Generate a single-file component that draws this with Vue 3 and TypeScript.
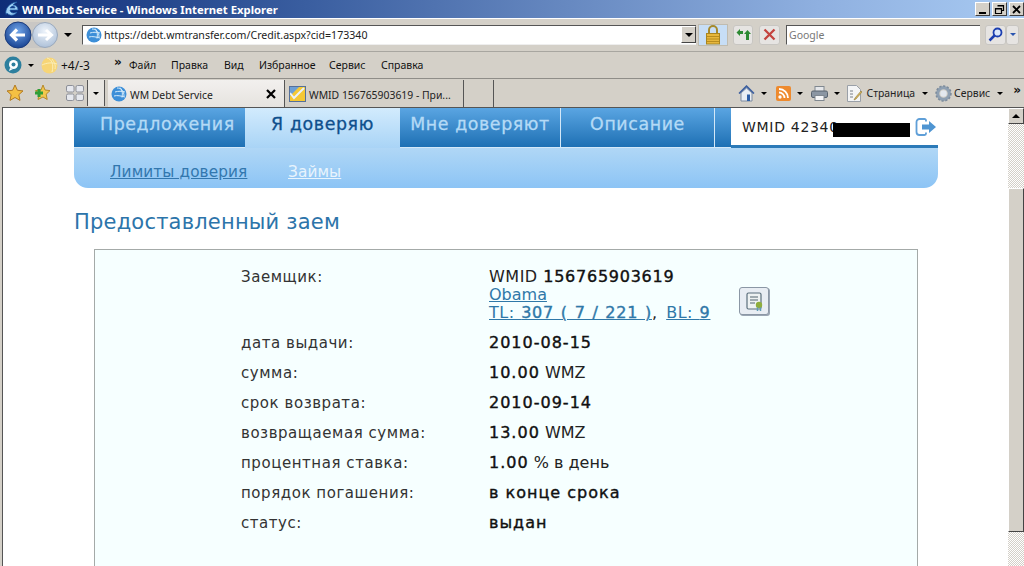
<script setup lang="ts">
interface Row { label: string; value: string; unit?: string }
const rows: Row[] = [
  { label: 'дата выдачи:', value: '2010-08-15' },
  { label: 'сумма:', value: '10.00', unit: ' WMZ' },
  { label: 'срок возврата:', value: '2010-09-14' },
  { label: 'возвращаемая сумма:', value: '13.00', unit: ' WMZ' },
  { label: 'процентная ставка:', value: '1.00', unit: ' % в день' },
  { label: 'порядок погашения:', value: 'в конце срока' },
  { label: 'статус:', value: 'выдан' },
]
const menu = ['Файл', 'Правка', 'Вид', 'Избранное', 'Сервис', 'Справка']
</script>

<template>
  <div class="window">
    <header class="titlebar">
      <svg class="ie" width="18" height="18" viewBox="0 0 18 18"><path d="M3 14C2 9 6 3 14 2c-2 1-3 2-4 3 3 0 5 2 5 5H7c0 3 4 4 7 2-2 4-8 4-10 1-1 1-1 2-1 1Zm4-6h5c0-2-3-3-5 0Z" fill="#9fd0f5" stroke="#1f5fa8" stroke-width=".7"/></svg>
      <span class="title">WM Debt Service - Windows Internet Explorer</span>
      <div class="winbtns">
        <span class="winbtn"><i class="min"></i></span>
        <span class="winbtn"><svg width="11" height="11" viewBox="0 0 11 11"><path d="M3.5 1.5h6v5h-2M1.500 4.500h6v5h-6z M3.500 2h6M1.500 5h6" fill="none" stroke="#000" stroke-width="1.200"/></svg></span>
        <span class="winbtn"><svg width="11" height="11" viewBox="0 0 11 11"><path d="M2 2l7 7M9 2l-7 7" stroke="#000" stroke-width="1.800"/></svg></span>
      </div>
    </header>

    <div class="addrbar">
      <svg class="nav" width="56" height="30" viewBox="0 0 56 30">
        <defs>
          <radialGradient id="bk" cx=".5" cy=".35" r=".7"><stop offset="0" stop-color="#6fa4e8"/><stop offset="1" stop-color="#123c8c"/></radialGradient>
          <radialGradient id="fw" cx=".5" cy=".35" r=".7"><stop offset="0" stop-color="#eef4fb"/><stop offset="1" stop-color="#a9bdd6"/></radialGradient>
        </defs>
        <rect x="5" y="2" width="46" height="26" rx="13" fill="#c9c7c4"/>
        <circle cx="42" cy="15" r="12.500" fill="url(#fw)" stroke="#9aa9bc"/>
        <path d="M35 15h13M43 10l5.500 5-5.500 5" fill="none" stroke="#fff" stroke-width="3"/>
        <circle cx="15" cy="15" r="13" fill="url(#bk)" stroke="#1b3c7c"/>
        <path d="M22 15H9M14 9.500 8.500 15l5.500 5.500" fill="none" stroke="#fff" stroke-width="3.200"/>
      </svg>
      <i class="tri nav-tri"></i>
      <div class="addr">
        <svg class="globe" width="16" height="16" viewBox="0 0 16 16"><circle cx="8" cy="8" r="7.500" fill="#3d8fd8"/><path d="M6 2c4 0 7 3 7 8M9 1.500c2 2 3 5 2 10M4 6c3-1 7-1 10 0M3 10c3-1 7 0 11 1" stroke="#d5ecfb" fill="none"/></svg>
        <span class="url">https://debt.wmtransfer.com/Credit.aspx?cid=173340</span>
        <span class="addr-drop"><i class="tri"></i></span>
      </div>
      <span class="lock">
        <svg width="16" height="20" viewBox="0 0 16 20"><path d="M4 9V5a4 4 0 0 1 8 0v4" fill="none" stroke="#a68a2c" stroke-width="2"/><rect x="1.500" y="8.500" width="13" height="10.500" fill="#e7b73c" stroke="#a98520"/><path d="M2 11.500h12M2 14h12M2 16.500h12" stroke="#b88d1f"/></svg>
      </span>
      <span class="tool refresh">
        <svg width="15" height="13" viewBox="0 0 15 13"><path d="M7 3H4V1L.5 4.500 4 8V6h3z" fill="#2d8a33"/><path d="M10 12V6H8l3.500-4L15 6h-2v6z" fill="#2d8a33"/></svg>
      </span>
      <span class="tool stop">
        <svg width="13" height="13" viewBox="0 0 13 13"><path d="M1.500 1.500l10 10M11.500 1.500l-10 10" stroke="#c4433f" stroke-width="2.300"/></svg>
      </span>
      <div class="search">Google</div>
      <span class="tool mag">
        <svg width="15" height="15" viewBox="0 0 15 15"><circle cx="9.500" cy="5.500" r="4" fill="#dbe8fb" stroke="#1c3fb0" stroke-width="1.800"/><path d="M6.500 8.500 1.500 13.500" stroke="#1c3fb0" stroke-width="2.500"/></svg>
      </span>
      <span class="tool magdrop"><i class="tri blue"></i></span>
    </div>

    <div class="menubar">
      <svg class="ring" width="18" height="18" viewBox="0 0 18 18"><circle cx="9" cy="9" r="8.500" fill="#2d7f9e"/><circle cx="9.500" cy="8.500" r="4.500" fill="#fff"/><circle cx="9.500" cy="8.500" r="2" fill="#2d7f9e"/><path d="M6 12l-1 3 4-2z" fill="#fff"/></svg>
      <i class="tri small ring-tri"></i>
      <svg class="coin" width="17" height="17" viewBox="0 0 17 17"><circle cx="8.500" cy="8.500" r="8" fill="#f7d576"/><path d="M6 1c5 1 7 7 5 14M11 2c2 3 4 6 3 10M1 8c4-2 10-3 15-1" stroke="#fbeeb8" fill="none"/></svg>
      <span class="score">+4/-3</span>
      <span class="chev">»</span>
      <nav class="menus"><span v-for="m in menu" :key="m">{{ m }}</span></nav>
    </div>

    <div class="tabbar">
      <svg class="star" width="18" height="18" viewBox="0 0 18 18"><path d="M9 1l2.400 5.300 5.600.6-4.200 3.800 1.200 5.700L9 13.500l-5 2.900 1.200-5.700L1 6.900l5.600-.6z" fill="#f5c043" stroke="#b27a22"/></svg>
      <svg class="star2" width="18" height="18" viewBox="0 0 18 18"><path d="M10 1l2 5 5 .6-3.800 3.600 1 5.300L10 13l-5 2.500 1-5.300L2.500 6.600 8 6z" fill="#f2c84d" stroke="#b6892a"/><path d="M6 5v8M2 9h8" stroke="#2f9e36" stroke-width="3"/></svg>
      <span class="quick">
        <svg width="18" height="16" viewBox="0 0 18 16"><g fill="#e6e8ee" stroke="#8c8f98"><rect x=".5" y=".5" width="7.500" height="6.500" rx="1.500"/><rect x="10" y=".5" width="7.500" height="6.500" rx="1.500"/><rect x=".5" y="9" width="7.500" height="6.500" rx="1.500"/><rect x="10" y="9" width="7.500" height="6.500" rx="1.500"/></g></svg>
      </span>
      <span class="quickdrop"><i class="tri small"></i></span>
      <div class="tab active">
        <svg class="globe tab-globe" width="16" height="16" viewBox="0 0 16 16"><circle cx="8" cy="8" r="7.500" fill="#3d8fd8"/><path d="M6 2c4 0 7 3 7 8M9 1.500c2 2 3 5 2 10M4 6c3-1 7-1 10 0M3 10c3-1 7 0 11 1" stroke="#d5ecfb" fill="none"/></svg>
        <span class="tabtext">WM Debt Service</span>
        <svg class="tabx" width="10" height="10" viewBox="0 0 10 10"><path d="M1 1l8 8M9 1 1 9" stroke="#000" stroke-width="2.200"/></svg>
      </div>
      <div class="tab second">
        <svg class="mail" width="17" height="16" viewBox="0 0 17 16"><rect width="17" height="16" fill="#f5c834"/><path d="M0 0h11L0 11z" fill="#6d9fd4"/><path d="M1 7l4 5 10-10" fill="none" stroke="#eaf2fa" stroke-width="2"/><rect x=".5" y=".5" width="16" height="15" fill="none" stroke="#55709a"/></svg>
        <span class="tabtext">WMID 156765903619 - При...</span>
      </div>
      <div class="tab blank"></div>
      <div class="righttools">
        <svg class="home" width="17" height="17" viewBox="0 0 17 17"><path d="M1 8.500 8.500 1l7.500 7.500" fill="#5d82c5" stroke="#3d5f9e" stroke-width="1.500"/><path d="M3 8v8h11V8L8.500 3z" fill="#e9eef4" stroke="#7c8ba0"/><rect x="9" y="9.500" width="3" height="6.500" fill="#2e5fa6"/></svg>
        <i class="tri small"></i>
        <svg class="rss" width="15" height="15" viewBox="0 0 15 15"><rect width="15" height="15" rx="2" fill="#ee8a2e"/><circle cx="4" cy="11" r="1.700" fill="#fff"/><path d="M3 6.500c3 0 5.500 2.500 5.500 5.500M3 3c5 0 9 4 9 9" fill="none" stroke="#fff" stroke-width="1.800"/></svg>
        <i class="tri small"></i>
        <svg class="printer" width="17" height="15" viewBox="0 0 17 15"><rect x="4" y="0.500" width="9" height="5" fill="#e5e7ea" stroke="#808890"/><rect x=".5" y="5" width="16" height="6.500" rx="1.500" fill="#8b96a3" stroke="#59636f"/><rect x="4" y="9.500" width="9" height="5" fill="#f5f6f8" stroke="#808890"/></svg>
        <i class="tri small"></i>
        <svg class="page" width="15" height="17" viewBox="0 0 15 17"><path d="M.5.500h9l4 4v12H.5z" fill="#f4f5f6" stroke="#9aa0a8"/><path d="M3 6h3M3 9h3M3 12h3" stroke="#7a8088"/><path d="M14 6 8 13l-1 2 2-1 6-7z" fill="#d9b65a" stroke="#8e7a3a" stroke-width=".6"/></svg>
        <span class="rt">Страница</span>
        <i class="tri small"></i>
        <svg class="gear" width="17" height="17" viewBox="0 0 16 16"><circle cx="8" cy="8" r="5.500" fill="none" stroke="#8fa0b2" stroke-width="3"/><circle cx="8" cy="8" r="7" fill="none" stroke="#7d8c9c" stroke-width="1.500" stroke-dasharray="2 1.600"/><circle cx="8" cy="8" r="3" fill="#e3e8ee"/></svg>
        <span class="rt">Сервис</span>
        <i class="tri small"></i>
        <span class="chev2">»</span>
      </div>
    </div>

    <div class="viewport">
      <main class="page-body">
        <div class="navtop">
          <a class="t1">Предложения</a>
          <a class="t2">Я доверяю</a>
          <a class="t3">Мне доверяют</a>
          <a class="t4">Описание</a>
          <span class="t5"></span>
          <div class="user">
            <span class="wmid">WMID 42340</span>
            <span class="redact"></span>
            <svg class="exit" width="22" height="18" viewBox="0 0 22 18"><path d="M11 3.500V2.500A1.500 1.500 0 0 0 9.500 1H4.500A3 3 0 0 0 1.500 4v10a3 3 0 0 0 3 3h5A1.500 1.500 0 0 0 11 15.500V14.500" fill="none" stroke="#5f9fd8" stroke-width="1.800"/><path d="M7 6.500h7V3l7 6-7 6v-3.500H7z" fill="#4f95d2"/></svg>
          </div>
        </div>
        <div class="subnav">
          <a class="s1">Лимиты доверия</a>
          <a class="s2">Займы</a>
        </div>
        <h1 class="heading">Предоставленный заем</h1>
        <section class="card">
          <div class="grid">
            <div class="lab">Заемщик:</div>
            <div class="val borrower">
              <div class="b1">WMID <b>156765903619</b></div>
              <div class="b2"><a>Obama</a></div>
              <div class="b3"><a>TL: <b>307 ( 7 / 221 )</b> </a>, <a class="bl">BL: <b>9</b></a></div>
              <span class="cert">
                <svg width="24" height="22" viewBox="0 0 24 22"><rect x="5" y="3" width="14" height="16" rx="1.500" fill="#eef2f2" stroke="#5b6f7c" stroke-width="1.200"/><path d="M8 7h8M8 10h8M8 13h5" stroke="#53656f" stroke-width="1.200"/><circle cx="17" cy="15" r="3.200" fill="#8fae3c"/><path d="M15.500 17.500v3.500M18.500 17.500v3.500" stroke="#5f9bb5" stroke-width="1.500"/></svg>
              </span>
            </div>
            <template v-for="r in rows" :key="r.label">
              <div class="lab">{{ r.label }}</div>
              <div class="val"><b>{{ r.value }}</b><span v-if="r.unit">{{ r.unit }}</span></div>
            </template>
          </div>
        </section>
      </main>
      <aside class="scrollbar">
        <span class="arrowbtn"><i class="uptri"></i></span>
        <span class="hatch top"></span>
        <span class="thumb"></span>
        <span class="hatch rest"></span>
      </aside>
    </div>
  </div>
</template>

<style>
html, body { margin: 0; padding: 0; overflow: hidden; }
</style>

<style scoped>
.window { width: 1024px; height: 566px; display: flex; flex-direction: column; overflow: hidden; background: #d4d0c8; font-family: "Noto Sans", "Liberation Sans", sans-serif; color: #111; }
svg { display: block; flex: none; }
.tri { display: block; width: 0; height: 0; border-left: 4px solid transparent; border-right: 4px solid transparent; border-top: 4px solid #000; flex: none; }
.tri.small { border-left-width: 3px; border-right-width: 3px; border-top-width: 3px; }
.tri.blue { border-top-color: #2a55b0; border-left-width: 3px; border-right-width: 3px; border-top-width: 3px; }

.titlebar { height: 18px; display: flex; align-items: center; background: linear-gradient(90deg, #0e2d78 0%, #3a5ea0 30%, #6688c0 55%, #8fb0e0 80%, #a8caf2 100%); flex: none; }
.ie { margin-left: 3px; }
.title { margin-left: 1px; color: #fff; font: 700 11.3px "Noto Sans", sans-serif; white-space: nowrap; }
.winbtns { margin-left: auto; display: flex; gap: 2px; margin-right: 0; }
.winbtn { width: 15px; height: 14px; box-sizing: border-box; background: #d4d0c8; border: 1px solid; border-color: #fff #404040 #404040 #fff; display: flex; align-items: center; justify-content: center; position: relative; }
.min { display: block; width: 7px; height: 2px; background: #000; margin-top: 7px; }

.addrbar { height: 33px; display: flex; align-items: center; flex: none; border-bottom: 1px solid #a8a6a0; box-shadow: 0 1px 0 #fff inset; }
.nav { margin-left: 3px; }
.nav-tri { margin-left: 5px; }
.addr { margin-left: 10px; width: 614px; height: 20px; box-sizing: border-box; background: #fff; border-top: 1px solid #555; border-left: 1px solid #555; border-bottom: 1px solid #eee; display: flex; align-items: center; }
.globe { margin-left: 3px; }
.url { margin-left: 2px; font-size: 10.6px; color: #222; white-space: nowrap; }
.addr-drop { margin-left: auto; width: 15px; height: 17px; background: #d4d0c8; border: 1px solid; border-color: #fff #444 #444 #fff; box-sizing: border-box; display: flex; align-items: center; justify-content: center; }
.lock { margin-left: 2px; width: 30px; height: 22px; background: #c7def6; border: 1px solid #c0bcb0; box-sizing: border-box; display: flex; align-items: center; justify-content: center; }
.tool { height: 20px; background: #e6e4e2; border-radius: 3px; border: 1px solid #c8c6c2; box-sizing: border-box; display: flex; align-items: center; justify-content: center; }
.refresh { margin-left: 5px; width: 20px; }
.stop { margin-left: 6px; width: 21px; }
.search { margin-left: 6px; width: 194px; height: 20px; box-sizing: border-box; background: #fff; border-top: 1px solid #555; border-left: 1px solid #555; border-bottom: 1px solid #eee; padding-left: 2px; font-size: 10.5px; line-height: 19px; color: #777; }
.mag { margin-left: 5px; width: 21px; }
.magdrop { margin-left: 0; width: 13px; }

.menubar { height: 26px; display: flex; align-items: center; border-bottom: 1px solid #8f8d88; flex: none; font-size: 10.5px; }
.ring { margin-left: 4px; }
.ring-tri { margin-left: 6px; }
.coin { margin-left: 7px; }
.score { margin-left: 3px; font-size: 12px; width: 37px; }
.chev { margin-left: 16px; font: 700 12px "DejaVu Sans", sans-serif; margin-top: -6px; width: 15px; }
.menus { margin-left: 0; display: flex; }
.menus span { white-space: nowrap; }
.menus span:nth-child(1) { width: 42px; }
.menus span:nth-child(2) { width: 53px; }
.menus span:nth-child(3) { width: 35px; }
.menus span:nth-child(4) { width: 70px; }
.menus span:nth-child(5) { width: 52px; }

.tabbar { height: 28px; display: flex; align-items: center; flex: none; font-size: 10.4px; }
.star { margin-left: 6px; }
.star2 { margin-left: 9px; }
.quick { margin-left: 15px; width: 21px; height: 26px; border-right: 1px solid #555; display: flex; align-items: center; }
.quickdrop { width: 17px; height: 26px; border-right: 1px solid #555; display: flex; align-items: center; justify-content: center; box-sizing: border-box; background: #e8e6e2; }
.tab { height: 27px; box-sizing: border-box; display: flex; align-items: center; margin-top: 1px; border-right: 1px solid #555; }
.tab.active { margin-left: 3px; width: 177px; background: linear-gradient(#f2f0ee, #e6e3df); }
.tab-globe { margin-left: 3px; }
.tabtext { margin-left: 3px; padding-top: 2px; white-space: nowrap; color: #222; }
.tabx { margin-left: auto; margin-right: 8px; }
.tab.second { margin-left: 2px; width: 177px; }
.mail { margin-left: 2px; }
.tab.blank { margin-left: 3px; width: 27px; }
.righttools { margin-left: auto; display: flex; align-items: center; }
.righttools .tri { margin-left: 6px; }
.rss { margin-left: 9px; }
.printer { margin-left: 8px; }
.page { margin-left: 7px; }
.home { margin-right: 0; }
.rt { margin-left: 5px; white-space: nowrap; color: #222; }
.gear { margin-left: 7px; }
.rt + .tri { margin-left: 7px; }
.gear + .rt { margin-left: 2px; }
.chev2 { margin-left: 10px; margin-right: 3px; margin-top: -6px; font: 700 12px "DejaVu Sans", sans-serif; }

.viewport { flex: 1; min-height: 0; display: flex; background: #fff; border-top: 1px solid #555; border-left: 1px solid #555; margin-left: 2px; }
.page-body { flex: 1; min-width: 0; padding-left: 71px; font-family: "DejaVu Sans", sans-serif; }

.navtop { width: 864px; height: 40px; display: flex; }
.navtop a { display: block; height: 40px; box-sizing: border-box; background: linear-gradient(#5aa5e2, #1e70b4); color: #b4daf6; font-size: 17.4px; line-height: 33px; letter-spacing: .6px; text-align: center; border-bottom: 1px solid #d4e8f8; white-space: nowrap; -webkit-text-stroke: .3px currentColor; }
.navtop .t1 { width: 171px; text-align: left; padding-left: 26px; }
.navtop .t2 { width: 155px; background: linear-gradient(#d2ebfd, #a9d4f6); color: #0f4f8c; border-bottom: 0; }
.navtop .t3 { width: 161px; border-right: 1px solid #d4e8f8; }
.navtop .t4 { width: 154px; border-right: 1px solid #d4e8f8; }
.t5 { width: 16px; background: linear-gradient(#5aa5e2, #1e70b4); border-bottom: 1px solid #d4e8f8; box-sizing: border-box; }
.user { width: 207px; height: 40px; box-sizing: border-box; background: #fff; border-bottom: 3px solid #2c7ab8; display: flex; align-items: center; padding-left: 11px; position: relative; font-size: 14px; color: #222; }
.wmid { letter-spacing: .7px; white-space: nowrap; }
.redact { position: absolute; left: 102px; top: 15px; width: 77px; height: 14px; background: #000; }
.exit { position: absolute; left: 184px; top: 10px; }

.subnav { width: 864px; height: 40px; background: linear-gradient(#b0d7f6, #8cc4f5); border-radius: 0 0 14px 14px; display: flex; align-items: center; padding: 8px 0 0 36px; box-sizing: border-box; font-size: 15.3px; }
.subnav a { text-decoration: underline; letter-spacing: .1px; }
.s1 { color: #3277ae; width: 178px; }
.s2 { color: #e8f4fd; }

.heading { margin: 21px 0 0; height: 40px; font-size: 21px; font-weight: 400; line-height: 26px; color: #2c74aa; letter-spacing: .2px; }
.card { margin-left: 20px; width: 824px; height: 340px; box-sizing: border-box; background: #f6ffff; border: 1px solid #a4aaa8; border-bottom: 0; padding: 16px 0 0 146px; }
.grid { display: grid; grid-template-columns: 248px 1fr; grid-template-rows: 66px; grid-auto-rows: 30px; font-size: 15px; color: #2a2a2a; }
.lab { letter-spacing: .55px; line-height: 22px; white-space: nowrap; color: #333; }
.val { font-size: 16px; line-height: 22px; white-space: nowrap; color: #222; }
.val b { font-weight: 400; color: #111; letter-spacing: 1px; -webkit-text-stroke: .4px currentColor; }
.borrower { position: relative; line-height: 18px; padding-top: 2px; }
.borrower .b1, .borrower .b2, .borrower .b3 { height: 18px; }
.borrower .b1 { letter-spacing: .5px; }
.borrower .b3 { letter-spacing: .5px; word-spacing: 1px; }
.borrower b { letter-spacing: .75px; }
.borrower a { color: #2f78a8; text-decoration: underline; }
.borrower a b { color: inherit; }
.borrower .bl { margin-left: 2px; }
.cert { position: absolute; left: 250px; top: 21px; width: 30px; height: 28px; box-sizing: border-box; border: 1px solid #8b97a5; border-radius: 3px; background: #e8edf3; box-shadow: 1px 1px 0 #9aa5b3; display: flex; align-items: center; justify-content: center; }

.scrollbar { width: 16px; flex: none; display: flex; flex-direction: column; }
.arrowbtn { height: 16px; box-sizing: border-box; background: #d4d0c8; border: 1px solid; border-color: #fff #444 #444 #fff; display: flex; align-items: center; justify-content: center; flex: none; }
.uptri { display: block; width: 0; height: 0; border-left: 4px solid transparent; border-right: 4px solid transparent; border-bottom: 4px solid #000; }
.hatch { background-color: #f2f1ee; background-image: repeating-conic-gradient(#d4d0c8 0 25%, #fff 0 50%); background-size: 2px 2px; }
.hatch.top { height: 64px; flex: none; }
.thumb { height: 344px; flex: none; box-sizing: border-box; background: #d4d0c8; border: 1px solid; border-color: #fff #444 #444 #fff; }
.hatch.rest { flex: 1; }
</style>
